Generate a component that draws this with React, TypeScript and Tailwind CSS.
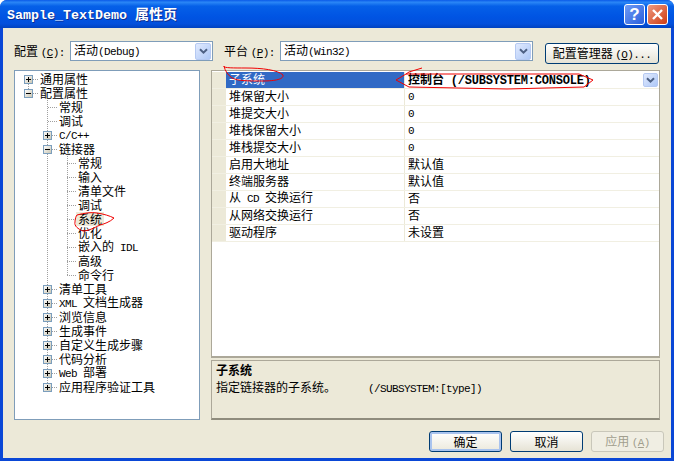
import React from "react";

const CJK = "font-['Noto_Sans_CJK_SC','Liberation_Sans',sans-serif]";
const LATIN = "font-['Liberation_Mono',monospace] text-[11px] tracking-[-0.6px] whitespace-pre";

// CJK runs stay at 12px, latin runs are squeezed to the 6px advance of the bitmap font
function T({ s }: { s: string }) {
  const runs = s.split(/([\x00-\x7f]+)/).filter(Boolean);
  return (
    <span>
      {runs.map((r, i) =>
        /^[\x00-\x7f]+$/.test(r) ? (
          <span key={i} className={LATIN}>
            {r}
          </span>
        ) : (
          <span key={i}>{r}</span>
        )
      )}
    </span>
  );
}

function Chevron() {
  return (
    <svg width="9" height="7" viewBox="0 0 9 7" fill="none">
      <path d="M1 1.2 L4.5 4.7 L8 1.2" stroke="#4d6185" strokeWidth="2" />
    </svg>
  );
}

function ComboArrow({ className }: { className: string }) {
  return (
    <div
      className={`${className} flex items-center justify-center rounded-[2px] border border-[#b5c9f2] bg-[linear-gradient(135deg,#e1eafe,#aec8f7)]`}
    >
      <Chevron />
    </div>
  );
}

function Combo({ text, width }: { text: string; width: string }) {
  return (
    <div className={`${width} flex h-[20px] items-center justify-between border border-[#7f9db9] bg-white pl-[3px] pr-px`}>
      <span className="leading-none">
        <T s={text} />
      </span>
      <ComboArrow className="h-[17px] w-[16px]" />
    </div>
  );
}

function Btn({ children, kind, width }: { children: React.ReactNode; kind?: "default" | "off"; width: string }) {
  const look =
    kind === "off"
      ? "border-[#c9c7ba] bg-[#f0eee3] text-[#a19e8e]"
      : kind === "default"
        ? "border-[#003c74] bg-[linear-gradient(#ffffff,#ece9dc)] text-black shadow-[inset_0_0_0_2px_#a9c3ee]"
        : "border-[#003c74] bg-[linear-gradient(#ffffff,#e6e3d5)] text-black";
  return (
    <div className={`${width} ${look} flex h-[21px] items-center justify-center rounded-[3px] border leading-none`}>
      <span>{children}</span>
    </div>
  );
}

type TreeItem = { t: string; lv: 0 | 1 | 2; box?: "+" | "-"; sel?: boolean };

const TREE: TreeItem[] = [
  { t: "通用属性", lv: 0, box: "+" },
  { t: "配置属性", lv: 0, box: "-" },
  { t: "常规", lv: 1 },
  { t: "调试", lv: 1 },
  { t: "C/C++", lv: 1, box: "+" },
  { t: "链接器", lv: 1, box: "-" },
  { t: "常规", lv: 2 },
  { t: "输入", lv: 2 },
  { t: "清单文件", lv: 2 },
  { t: "调试", lv: 2 },
  { t: "系统", lv: 2, sel: true },
  { t: "优化", lv: 2 },
  { t: "嵌入的 IDL", lv: 2 },
  { t: "高级", lv: 2 },
  { t: "命令行", lv: 2 },
  { t: "清单工具", lv: 1, box: "+" },
  { t: "XML 文档生成器", lv: 1, box: "+" },
  { t: "浏览信息", lv: 1, box: "+" },
  { t: "生成事件", lv: 1, box: "+" },
  { t: "自定义生成步骤", lv: 1, box: "+" },
  { t: "代码分析", lv: 1, box: "+" },
  { t: "Web 部署", lv: 1, box: "+" },
  { t: "应用程序验证工具", lv: 1, box: "+" },
];

const PROPS = [
  ["堆保留大小", "0"],
  ["堆提交大小", "0"],
  ["堆栈保留大小", "0"],
  ["堆栈提交大小", "0"],
  ["启用大地址", "默认值"],
  ["终端服务器", "默认值"],
  ["从 CD 交换运行", "否"],
  ["从网络交换运行", "否"],
  ["驱动程序", "未设置"],
];

function Expander({ kind }: { kind: "+" | "-" }) {
  return (
    <svg width="9" height="9" viewBox="0 0 9 9" className="relative z-10 shrink-0">
      <defs>
        <linearGradient id="exp" x1="0" y1="0" x2="1" y2="1">
          <stop offset="0" stopColor="#ffffff" />
          <stop offset="1" stopColor="#c8c4b0" />
        </linearGradient>
      </defs>
      <rect x="0.5" y="0.5" width="8" height="8" fill="url(#exp)" stroke="#7b9ebd" />
      <path d="M2 4.5 H7" stroke="#000" />
      {kind === "+" && <path d="M4.5 2 V7" stroke="#000" />}
    </svg>
  );
}

function TreeRow({ item }: { item: TreeItem }) {
  const indent = item.lv === 0 ? "pl-[9px]" : item.box ? "pl-[28px]" : item.lv === 1 ? "pl-[33px]" : "pl-[52px]";
  return (
    <div className={`${indent} flex h-[14px] items-center leading-none`}>
      {item.box ? (
        <>
          <Expander kind={item.box} />
          <div className="w-[5px] border-t border-dotted border-[#a0a0a0]" />
        </>
      ) : (
        <div className="w-[9px] border-t border-dotted border-[#a0a0a0]" />
      )}
      <span className={`${item.sel ? "bg-[#ece9d8]" : ""} flex h-[14px] items-center px-[2px]`}>
        <T s={item.t} />
      </span>
    </div>
  );
}

export default function App() {
  return (
    <div className={`${CJK} relative h-[461px] w-[674px] overflow-hidden rounded-t-[7px] bg-[#0a47d6] text-[12px] text-black`}>
      {/* title bar */}
      <div className="flex h-[28px] items-center justify-between bg-[linear-gradient(#0a5ae8_0%,#2a86f6_8%,#0560e8_22%,#0054e3_60%,#0350dc_85%,#0142c0_100%)] pl-[7px] pr-[6px]">
        <span className="text-[14px] font-bold leading-none text-white [text-shadow:1px_1px_0_#0f2f8f]">
          <span className="font-['Liberation_Mono',monospace] text-[13.33px]">Sample_TextDemo </span>属性页
        </span>
        <div className="flex items-center gap-[2px]">
          <div className="flex h-[21px] w-[21px] items-center justify-center rounded-[3px] border border-white bg-[linear-gradient(135deg,#6f9bf5,#2a5fdc)] font-['Liberation_Sans',sans-serif] text-[17px] font-bold leading-none text-white">
            ?
          </div>
          <div className="flex h-[21px] w-[21px] items-center justify-center rounded-[3px] border border-white bg-[linear-gradient(135deg,#ee9a80,#cf3c13)]">
            <svg width="13" height="13" viewBox="0 0 13 13">
              <path d="M2 2 L11 11 M11 2 L2 11" stroke="#fff" strokeWidth="2.4" />
            </svg>
          </div>
        </div>
      </div>

      {/* client area */}
      <div className="mx-[3px] h-[430px] bg-[#ece9d8] px-[11px] pt-[13px]">
        <div className="flex h-[22px] items-start">
          <span className="h-[20px] w-[56px] whitespace-pre leading-[20px]">
            配置 <span className={LATIN}>(<u>C</u>):</span>
          </span>
          <Combo text="活动(Debug)" width="w-[143px]" />
          <span className="ml-[11px] h-[20px] w-[56px] whitespace-pre leading-[20px]">
            平台 <span className={LATIN}>(<u>P</u>):</span>
          </span>
          <Combo text="活动(Win32)" width="w-[253px]" />
          <div className="ml-[12px] mt-[2px]">
            <Btn width="w-[114px]">
              配置管理器 <span className={LATIN}>(<u>O</u>)...</span>
            </Btn>
          </div>
        </div>

        <div className="mt-[7px] flex h-[350px] gap-[11px]">
          {/* tree */}
          <div className="relative h-[350px] w-[186px] border border-[#7f9db9] bg-white pt-px">
            <div className="absolute left-[13px] top-[13px] h-[9px] border-l border-dotted border-[#a0a0a0]" />
            <div className="absolute left-[32px] top-[29px] h-[287px] border-l border-dotted border-[#a0a0a0]" />
            <div className="absolute left-[52px] top-[85px] h-[119px] border-l border-dotted border-[#a0a0a0]" />
            {TREE.map((item, i) => (
              <TreeRow key={i} item={item} />
            ))}
          </div>

          {/* property grid + description */}
          <div className="flex h-[350px] w-[449px] flex-col">
            <div className="h-[288px] border border-b-2 border-[#aca899] bg-white pt-px">
              <div className="flex h-[17px] border-b border-[#f1efe2]">
                <div className="w-[14px] bg-[#ece9d8]" />
                <div className="flex w-[178px] items-center bg-[#316ac5] pb-[2px] pl-[3px] leading-none text-white">子系统</div>
                <div className="w-[1px] bg-[#ece9d8]" />
                <div className="flex flex-1 items-center justify-between pl-[3px] pr-px font-bold leading-none">
                  <span className="whitespace-pre">
                    控制台 <span className="ml-[4px] font-['Liberation_Mono',monospace] text-[12px] tracking-[-0.2px]">(/SUBSYSTEM:CONSOLE)</span>
                  </span>
                  <ComboArrow className="h-[14px] w-[15px]" />
                </div>
              </div>
              {PROPS.map(([name, value]) => (
                <div key={name} className="flex h-[17px] border-b border-[#f1efe2]">
                  <div className="w-[14px] bg-[#ece9d8]" />
                  <div className="flex w-[178px] items-center pb-[2px] pl-[3px] leading-none">
                    <T s={name} />
                  </div>
                  <div className="w-[1px] bg-[#ece9d8]" />
                  <div className="flex flex-1 items-center pb-[2px] pl-[3px] leading-none">
                    <T s={value} />
                  </div>
                </div>
              ))}
            </div>
            <div className="mt-[2px] h-[60px] border border-b-2 border-[#aca899] border-b-[#8f8c7d] bg-[#ece9d8] pl-[4px] leading-[17px]">
              <div className="font-bold">子系统</div>
              <div className="whitespace-pre">
                <T s="指定链接器的子系统。" />
                <span className={`ml-[32px] ${LATIN}`}>(/SUBSYSTEM:[type])</span>
              </div>
            </div>
          </div>
        </div>

        <div className="-mr-[4px] mt-[11px] flex justify-end gap-[8px]">
          <Btn kind="default" width="w-[73px]">确定</Btn>
          <Btn width="w-[73px]">取消</Btn>
          <Btn kind="off" width="w-[73px]">
            应用 <span className={LATIN}>(<u>A</u>)</span>
          </Btn>
        </div>
      </div>

      {/* hand-drawn red marks on top of the screenshot */}
      <svg className="pointer-events-none absolute left-0 top-0" width="674" height="461" fill="none" stroke="#f00000" strokeWidth="1">
        <path d="M224 66 C223 68 232 68 246 68 C262 68 278 70 283 75 C284 79 276 81 262 81 C248 81 238 81 232 78 C228 75 225 71 224 66 Z" />
        <path d="M422 68 L409 72 L406 74 L579 74 L593 80 L584 87 L507 89 L409 87 L396 80 L406 74" />
        <path d="M77 215 C84 213 92 212 97 213 C104 214 110 216 114 218 C110 222 104 224 100 225 C94 228 88 231 83 231 C78 229 74 226 75 222 C75 219 76 216 77 215 Z" />
      </svg>
    </div>
  );
}
